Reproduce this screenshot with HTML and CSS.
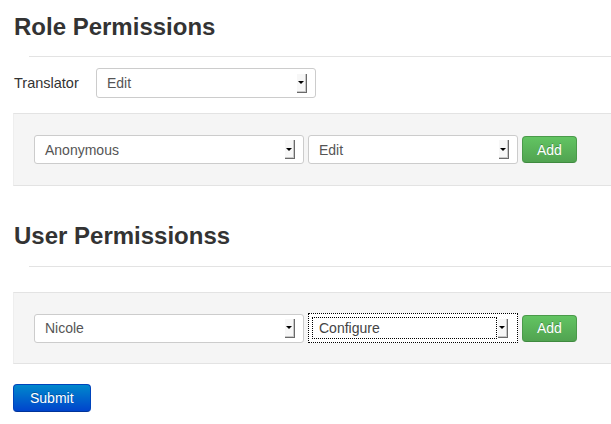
FILE: index.html
```html
<!DOCTYPE html>
<html>
<head>
<meta charset="utf-8">
<link rel="stylesheet" href="styles.css">
</head>
<body>
<div class="page">
  <h2 class="title title-first">Role Permissions</h2>
  <hr class="rule rule-first">
  <div class="field-row">
    <label class="field-label">Translator</label>
    <div class="sel sel-translator"><span class="sel-text">Edit</span><span class="sel-arrow"></span></div>
  </div>
  <div class="well well-first">
    <div class="sel sel-wide"><span class="sel-text">Anonymous</span><span class="sel-arrow"></span></div>
    <div class="sel sel-mid"><span class="sel-text">Edit</span><span class="sel-arrow"></span></div>
    <button class="btn btn-success">Add</button>
  </div>
  <h2 class="title title-second">User Permissionss</h2>
  <hr class="rule rule-second">
  <div class="well well-second">
    <div class="sel sel-wide"><span class="sel-text">Nicole</span><span class="sel-arrow"></span></div>
    <div class="sel sel-mid sel-focus"><span class="sel-text sel-text-focus">Configure</span><span class="sel-arrow"></span></div>
    <button class="btn btn-success">Add</button>
  </div>
  <button class="btn btn-primary">Submit</button>
</div>
</body>
</html>
```

FILE: styles.css
```css
html, body {
  margin: 0;
  padding: 0;
  background: #fff;
  overflow: hidden;
}
body {
  font-family: "Liberation Sans", Arial, Helvetica, sans-serif;
  font-size: 14px;
  color: #333;
}
.page {
  padding-left: 13px;
}
.title {
  font-size: 24px;
  font-weight: bold;
  line-height: 36px;
  margin: 0;
  padding-left: 1px;
  color: #333;
}
.title-first { margin-top: 9px; }
.title-second { margin-top: 32px; }
.rule {
  border: 0;
  border-top: 1px solid #e3e3e3;
  height: 0;
  margin: 0 0 0 16px;
}
.rule-first { margin-top: 11px; }
.rule-second { margin-top: 12px; }
.field-row {
  display: flex;
  align-items: center;
  margin-top: 11px;
}
.field-label {
  width: 82px;
  padding-left: 1px;
  font-size: 14.5px;
  color: #333;
}
.sel {
  display: flex;
  align-items: center;
  box-sizing: border-box;
  height: 29px;
  border: 1px solid #ccc;
  border-radius: 3px;
  background: #fff;
  padding: 0 8px 0 10px;
  color: #555;
}
.sel-translator { width: 220px; height: 30px; }
.sel-wide { width: 270px; }
.sel-mid { width: 210px; margin-left: 4px; }
.sel-text {
  flex: 1;
  line-height: 20px;
}
.sel-arrow {
  width: 10px;
  height: 19px;
  box-sizing: border-box;
  border-right: 1px solid #6a6a6a;
  border-bottom: 1px solid #6a6a6a;
  box-shadow: inset -1px -1px 0 #c8c8c8;
  background: #f7f7f7;
  display: flex;
  align-items: center;
  justify-content: center;
}
.sel-arrow::before {
  content: "";
  width: 0;
  height: 0;
  border-left: 3px solid transparent;
  border-right: 3px solid transparent;
  border-top: 3px solid #000;
  margin-left: -1px;
}
.sel-focus {
  border: 1px dotted #000;
  border-radius: 0;
  padding-left: 3px;
  padding-right: 9px;
  height: 30px;
}
.sel-text-focus {
  border: 1px dotted #000;
  padding-left: 6px;
  line-height: 20px;
  margin-right: 1px;
  color: #444;
}
.well {
  display: flex;
  align-items: center;
  background: #f5f5f5;
  border-top: 1px solid #e3e3e3;
  border-bottom: 1px solid #e3e3e3;
  border-left: 1px solid #eee;
  padding: 21px 20px;
}
.well-first { margin-top: 15px; }
.well-second { margin-top: 25px; padding: 20px 20px; }
.btn {
  font-family: "Liberation Sans", Arial, Helvetica, sans-serif;
  font-size: 14px;
  color: #fff;
  border-radius: 4px;
  cursor: pointer;
  line-height: 20px;
  text-shadow: 0 -1px 0 rgba(0, 0, 0, 0.25);
}
.btn-success {
  margin-left: 4px;
  height: 27px;
  padding: 0 14px;
  background: linear-gradient(#62c462, #51a351);
  border: 1px solid #4a9a4a;
  border-bottom-color: #3f8a3f;
}
.btn-primary {
  margin-top: 20px;
  height: 28px;
  padding: 0 16px;
  background: linear-gradient(#0088cc, #0044cc);
  border: 1px solid #0044bb;
  border-bottom-color: #003399;
}
```
